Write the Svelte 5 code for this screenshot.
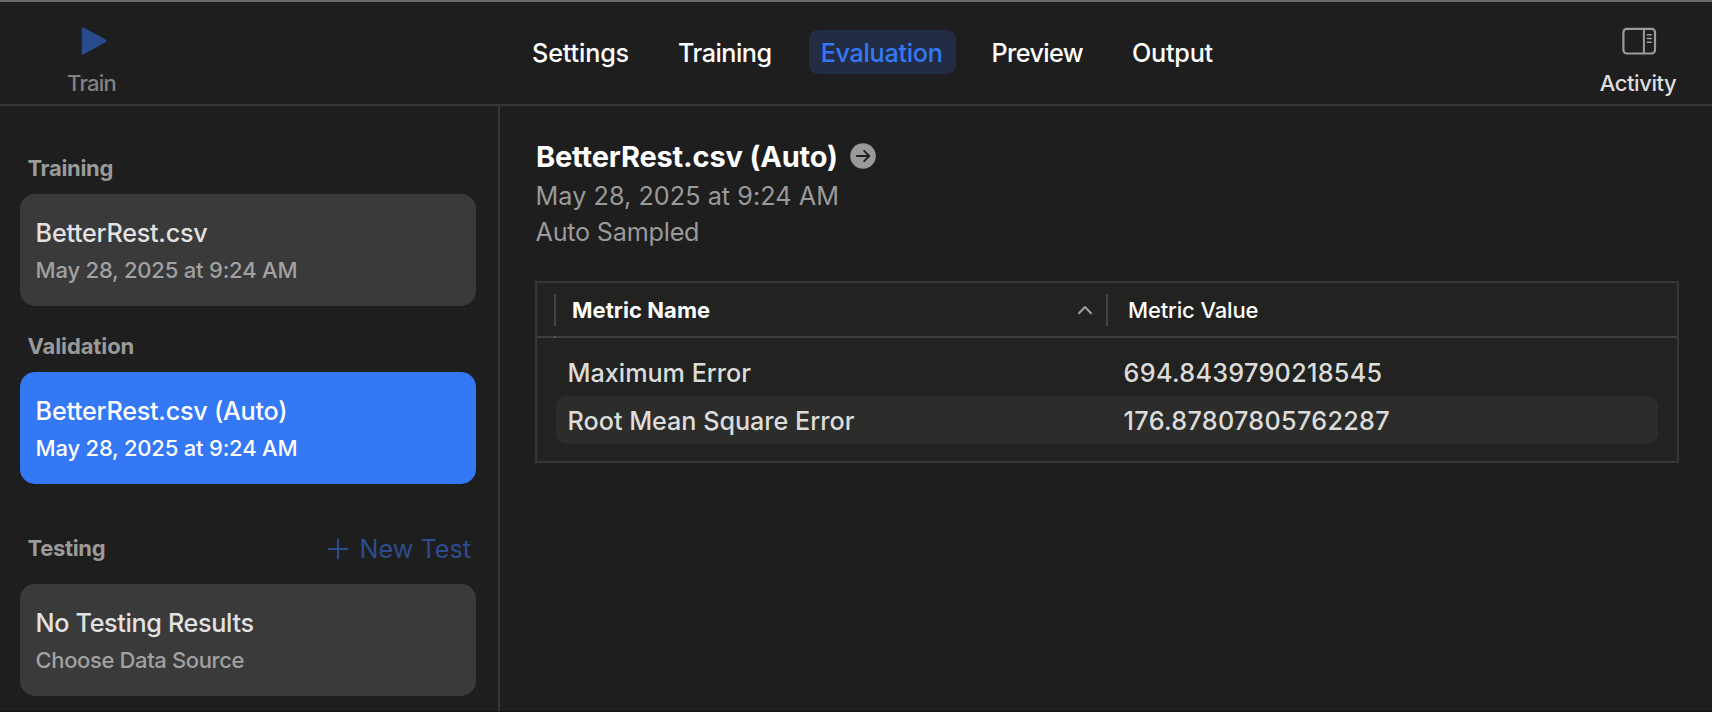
<script>
  const tabs = [
    { name: 'Settings', spacing: -0.16 },
    { name: 'Training', spacing: -0.49 },
    { name: 'Evaluation', spacing: -0.3 },
    { name: 'Preview', spacing: -0.62 },
    { name: 'Output', spacing: -0.25 }
  ];
  let active = $state('Evaluation');

  const metrics = [
    { name: 'Maximum Error', value: '694.8439790218545' },
    { name: 'Root Mean Square Error', value: '176.87807805762287' }
  ];
</script>

{#snippet card(title, detail, selected, empty)}
  <div class="card" class:selected class:empty>
    <div class="card-title">{title}</div>
    <div class="card-detail">{detail}</div>
  </div>
{/snippet}

<div class="window">
  <header>
    <div class="tool train">
      <svg width="28" height="32" viewBox="0 0 28 32">
        <path d="M3.2 4 L25 15.9 L3.2 28 Z" fill="#284b8d" stroke="#284b8d" stroke-width="3" stroke-linejoin="round" />
      </svg>
      <span>Train</span>
    </div>
    <nav>
      {#each tabs as tab}
        <button class:active={tab.name === active} style:letter-spacing="{tab.spacing}px" onclick={() => (active = tab.name)}>{tab.name}</button>
      {/each}
    </nav>
    <div class="tool activity">
      <svg width="36" height="32" viewBox="0 0 36 32" fill="none" stroke="#9b9b9b">
        <rect x="2.4" y="3.9" width="31.6" height="24.6" rx="3.4" stroke-width="2.2" />
        <path d="M22.9 4v24.5" stroke-width="2" />
        <path d="M26.2 9.7h4M26.2 13.5h4M26.2 17.2h4" stroke-width="1.5" stroke-linecap="round" />
      </svg>
      <span>Activity</span>
    </div>
  </header>

  <div class="body">
    <aside>
      <div class="label">Training</div>
      {@render card('BetterRest.csv', 'May 28, 2025 at 9:24 AM', false, false)}
      <div class="label validation">Validation</div>
      {@render card('BetterRest.csv (Auto)', 'May 28, 2025 at 9:24 AM', true, false)}
      <div class="testing">
        <div class="label">Testing</div>
        <div class="new-test">
          <svg width="22" height="22" viewBox="0 0 22 22">
            <path d="M11 1.5v19M1.5 11h19" stroke="#2b4d8f" stroke-width="2" stroke-linecap="round" />
          </svg>
          <span>New Test</span>
        </div>
      </div>
      {@render card('No Testing Results', 'Choose Data Source', false, true)}
    </aside>

    <main>
      <div class="heading">
        <h1>BetterRest.csv (Auto)</h1>
        <svg width="26" height="26" viewBox="0 0 26 26">
          <circle cx="13" cy="13" r="12.8" fill="#9a9a9a" />
          <path d="M6.8 13h12.4M14.1 7.8l5.2 5.2l-5.2 5.2" fill="none" stroke="#1e1e1e" stroke-width="1.8" stroke-linecap="round" stroke-linejoin="round" />
        </svg>
      </div>
      <div class="meta date">May 28, 2025 at 9:24 AM</div>
      <div class="meta sampled">Auto Sampled</div>

      <section class="table">
        <div class="head">
          <div class="cell name">
            Metric Name
            <svg width="16" height="12" viewBox="0 0 16 12">
              <path d="M2 9.3L8 3l6 6.3" fill="none" stroke="#a0a09f" stroke-width="2" stroke-linecap="round" stroke-linejoin="round" />
            </svg>
          </div>
          <div class="cell value">Metric Value</div>
        </div>
        <div class="rule"></div>
        <div class="rows">
          {#each metrics as m}
            <div class="row"><span>{m.name}</span><span class="number">{m.value}</span></div>
          {/each}
        </div>
      </section>
    </main>
  </div>
</div>

<style>
  :global(body) {
    background: #1e1e1e;
    overflow: hidden;
  }
  .window {
    box-sizing: border-box;
    width: 1712px;
    height: 712px;
    display: flex;
    flex-direction: column;
    background: #1e1e1e;
    border-top: 2px solid #6a6b6b;
    border-bottom: 1px solid #181617;
    font-family: Inter, 'Liberation Sans', sans-serif;
    color: #fff;
    white-space: nowrap;
    overflow: hidden;
  }
  svg {
    display: block;
    flex: none;
  }
  header {
    box-sizing: border-box;
    height: 104px;
    flex: none;
    display: grid;
    grid-template-columns: 184px 1fr 148px;
    border-bottom: 2px solid #363636;
  }
  .tool {
    display: flex;
    flex-direction: column;
    align-items: center;
    padding-top: 23px;
    font-size: 22px;
    line-height: 28px;
    font-weight: 500;
  }
  .tool span {
    margin-top: 12px;
  }
  .train {
    padding-right: 1px;
    color: #828282;
    letter-spacing: -0.8px;
  }
  .train svg {
    margin-left: 4px;
  }
  .activity {
    color: #dedede;
    letter-spacing: -0.45px;
  }
  .activity svg {
    margin-left: 2px;
  }
  nav {
    display: flex;
    justify-content: center;
    gap: 24px;
    padding-top: 28px;
  }
  button {
    height: 44px;
    padding: 2px 13px 0 12px;
    border: 0;
    border-radius: 9px;
    background: none;
    color: #fff;
    font: 500 25.2px/42px Inter, 'Liberation Sans', sans-serif;
  }
  nav button {
    position: relative;
    left: -1px;
  }
  button.active {
    background: #222d45;
    color: #3478f6;
  }
  .body {
    flex: 1;
    display: flex;
    min-height: 0;
  }
  aside {
    box-sizing: border-box;
    width: 500px;
    flex: none;
    padding: 48px 22px 0 20px;
    border-right: 2px solid #363636;
  }
  .label {
    margin: 0 0 12px 7.5px;
    font-size: 22px;
    line-height: 28px;
    font-weight: 700;
    letter-spacing: -0.33px;
    color: #9a9a9a;
  }
  .validation {
    margin-top: 26px;
    letter-spacing: -0.1px;
  }
  .card {
    box-sizing: border-box;
    height: 112px;
    padding: 23px 15.6px 0;
    border-radius: 15px;
    background: #3a3a3a;
  }
  .card-title {
    font-size: 25.2px;
    line-height: 32px;
    font-weight: 500;
    letter-spacing: -0.26px;
    color: #e2e2e2;
  }
  .card-detail {
    margin-top: 7px;
    font-size: 22px;
    line-height: 28px;
    font-weight: 500;
    letter-spacing: -0.2px;
    color: #a1a1a1;
  }
  .empty .card-title {
    letter-spacing: -0.35px;
  }
  .empty .card-detail {
    letter-spacing: -0.38px;
  }
  .card.selected {
    background: #3478f6;
  }
  .selected .card-title,
  .selected .card-detail {
    color: #fff;
  }
  .testing {
    display: flex;
    justify-content: space-between;
    margin: 50px 5px 22px 0;
    height: 28px;
  }
  .new-test {
    display: flex;
    align-items: center;
    gap: 11px;
    font-size: 25.2px;
    line-height: 30px;
    color: #2b4d8f;
  }
  .new-test svg {
    margin-top: 2px;
  }
  .new-test span {
    margin-top: 1px;
  }
  main {
    flex: 1;
    min-width: 0;
    padding: 32px 33px 0 35px;
  }
  .heading {
    display: flex;
    align-items: center;
    gap: 12px;
    height: 36px;
  }
  h1 {
    margin: 0;
    padding: 2px 0 0 1px;
    font-size: 29px;
    line-height: 36px;
    font-weight: 700;
    letter-spacing: -0.17px;
  }
  .meta {
    font-size: 25.2px;
    line-height: 36px;
    color: #9a9a9a;
  }
  .date {
    margin-top: 4px;
    padding-left: 0.5px;
    letter-spacing: 0.05px;
  }
  .sampled {
    letter-spacing: -0.22px;
    padding-left: 0.5px;
  }
  .table {
    box-sizing: border-box;
    width: 1144px;
    height: 182px;
    margin-top: 31px;
    border: 2px solid #363635;
    background: #222220;
  }
  .head {
    display: flex;
    padding: 11px 0 10px 17px;
    font-size: 22px;
    line-height: 32px;
  }
  .cell {
    box-sizing: border-box;
    height: 32px;
    border-left: 2px solid #454544;
  }
  .name {
    width: 552px;
    display: flex;
    align-items: center;
    justify-content: space-between;
    padding: 0 13px 0 16px;
    font-weight: 700;
    letter-spacing: 0.05px;
  }
  .value {
    flex: 1;
    padding-left: 20px;
    font-weight: 500;
    letter-spacing: -0.14px;
  }
  .rule {
    height: 2px;
    background: linear-gradient(#585857, #585857) 17px 0 / 2px 2px no-repeat #3e3e3d;
  }
  .rows {
    padding: 10px 19px 0;
  }
  .row {
    box-sizing: border-box;
    height: 48px;
    display: grid;
    grid-template-columns: 556px 1fr;
    padding: 2px 11.6px 0;
    border-radius: 10px;
    font-size: 25.2px;
    line-height: 46px;
    font-weight: 500;
    letter-spacing: -0.03px;
    color: #dcdcdb;
  }
  .row:nth-child(even) {
    background: #2c2c2b;
  }
  .number {
    letter-spacing: 0.3px;
  }
</style>
